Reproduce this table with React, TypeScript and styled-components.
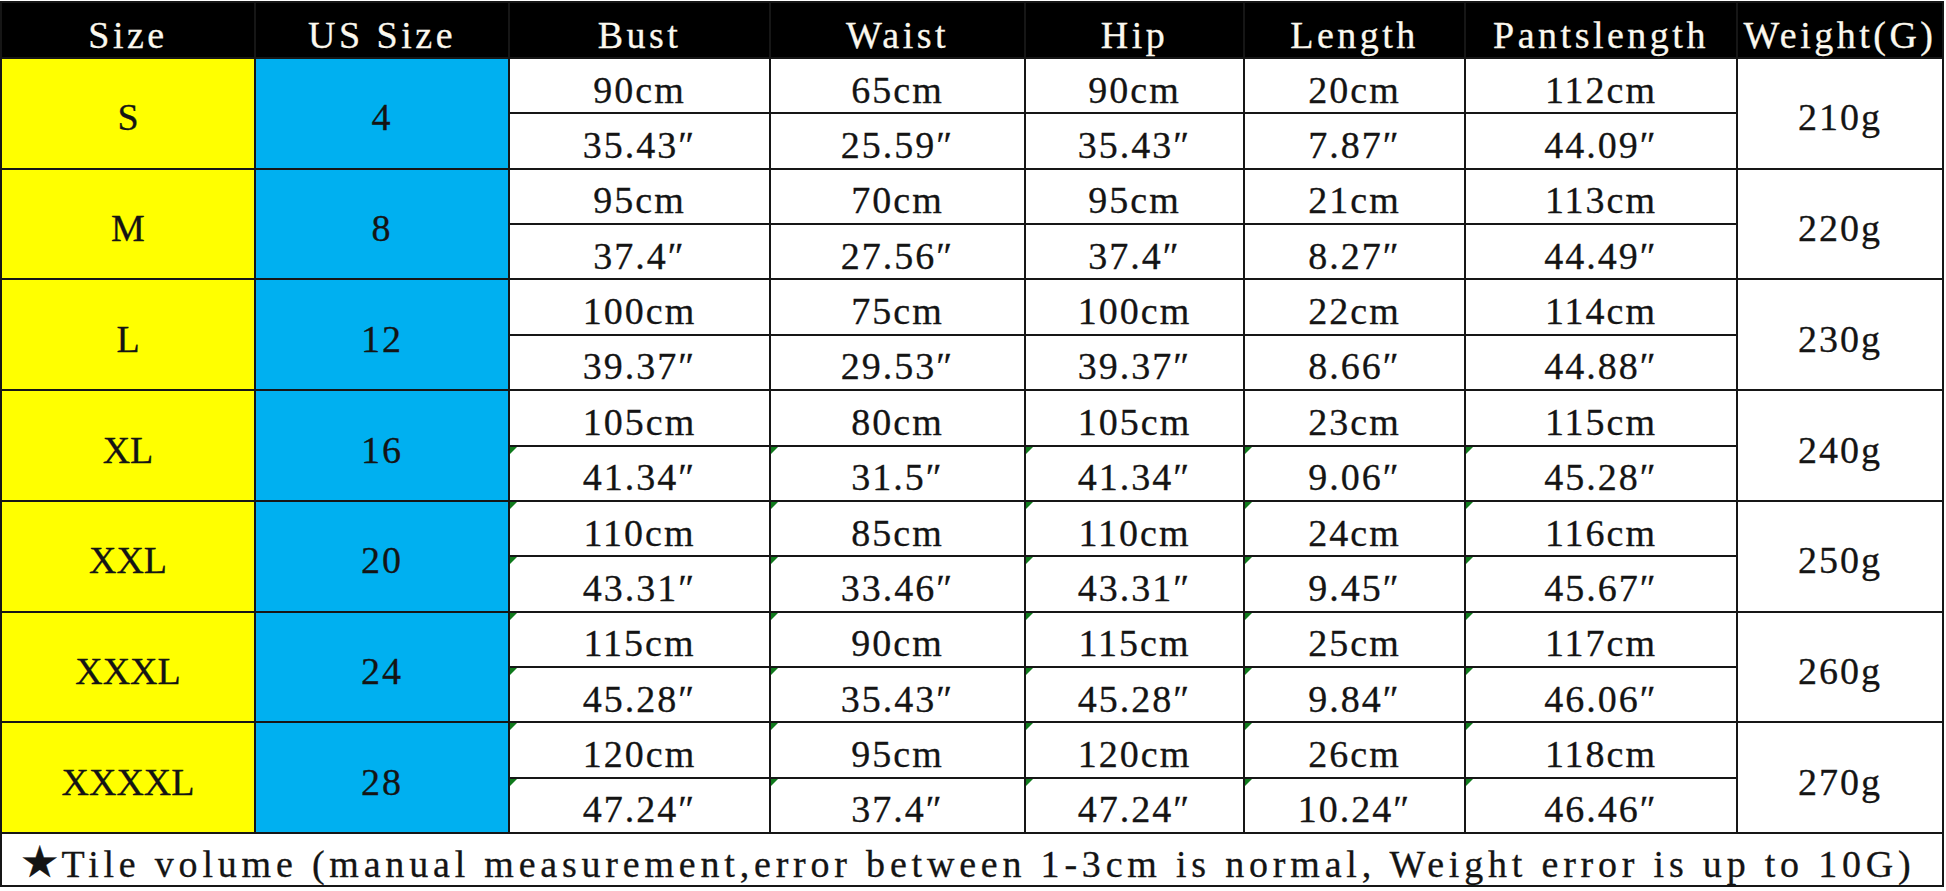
import React from "react";
import styled, { createGlobalStyle, css } from "styled-components";

const GlobalStyle = createGlobalStyle`
  html, body {
    margin: 0;
    padding: 0;
    background: #fff;
  }
  body {
    font-family: "Liberation Serif", "DejaVu Serif", serif;
  }
`;

const Chart = styled.div`
  display: grid;
  grid-template-columns: 252px 252px 259px 253px 217px 219px 270px 204px;
  grid-template-rows: 54px repeat(14, 53.36px) 51px;
  gap: 2px;
  padding: 2px;
  margin-top: 1px;
  width: fit-content;
  background: #161616;
`;

const HeadCell = styled.div`
  background: #000;
  color: #fbf8ee;
  display: flex;
  align-items: center;
  justify-content: center;
  padding-top: 9px;
`;

const Cell = styled.div<{ $bg?: string; $span?: number; $flag?: boolean }>`
  position: relative;
  grid-row: span ${(p) => p.$span ?? 1};
  background: ${(p) => p.$bg ?? "#fff"};
  color: #141414;
  display: flex;
  align-items: center;
  justify-content: center;
  padding-top: 8px;

  ${(p) =>
    p.$flag &&
    css`
      &::before {
        content: "";
        position: absolute;
        top: 0;
        left: 0;
        border-top: 7px solid #0f7a1c;
        border-right: 7px solid transparent;
      }
    `}
`;

const Label = styled.span<{ $track?: number }>`
  display: inline-block;
  font-size: 38px;
  line-height: 1;
  white-space: nowrap;
  letter-spacing: ${(p) => p.$track ?? 2}px;
  -webkit-text-stroke: 0.3px currentColor;
`;

const Note = styled.div`
  grid-column: 1 / -1;
  background: #fff;
  color: #141414;
  display: flex;
  align-items: center;
  padding: 4px 0 0 18px;
`;

const Star = styled.span`
  font-family: "DejaVu Sans", sans-serif;
  font-size: 44px;
  line-height: 1;
  letter-spacing: 0;
  margin-right: 2px;
`;

const YELLOW = "#ffff00";
const BLUE = "#00b0f0";

const headers = ["Size", "US Size", "Bust", "Waist", "Hip", "Length", "Pantslength", "Weight(G)"];

type Row = { size: string; us: string; cm: string[]; inch: string[]; weight: string };

const rows: Row[] = [
  { size: "S", us: "4", cm: ["90cm", "65cm", "90cm", "20cm", "112cm"], inch: ["35.43", "25.59", "35.43", "7.87", "44.09"], weight: "210g" },
  { size: "M", us: "8", cm: ["95cm", "70cm", "95cm", "21cm", "113cm"], inch: ["37.4", "27.56", "37.4", "8.27", "44.49"], weight: "220g" },
  { size: "L", us: "12", cm: ["100cm", "75cm", "100cm", "22cm", "114cm"], inch: ["39.37", "29.53", "39.37", "8.66", "44.88"], weight: "230g" },
  { size: "XL", us: "16", cm: ["105cm", "80cm", "105cm", "23cm", "115cm"], inch: ["41.34", "31.5", "41.34", "9.06", "45.28"], weight: "240g" },
  { size: "XXL", us: "20", cm: ["110cm", "85cm", "110cm", "24cm", "116cm"], inch: ["43.31", "33.46", "43.31", "9.45", "45.67"], weight: "250g" },
  { size: "XXXL", us: "24", cm: ["115cm", "90cm", "115cm", "25cm", "117cm"], inch: ["45.28", "35.43", "45.28", "9.84", "46.06"], weight: "260g" },
  { size: "XXXXL", us: "28", cm: ["120cm", "95cm", "120cm", "26cm", "118cm"], inch: ["47.24", "37.4", "47.24", "10.24", "46.46"], weight: "270g" },
];

export default function App() {
  return (
    <>
      <GlobalStyle />
      <Chart>
        {headers.map((h) => (
          <HeadCell key={h}>
            <Label $track={3.5}>{h}</Label>
          </HeadCell>
        ))}
        {rows.map((r, i) => (
          <React.Fragment key={r.size}>
            <Cell $bg={YELLOW} $span={2}>
              <Label $track={0}>{r.size}</Label>
            </Cell>
            <Cell $bg={BLUE} $span={2}>
              <Label>{r.us}</Label>
            </Cell>
            {r.cm.map((v, j) => (
              <Cell key={`cm_${j}`} $flag={i >= 4}>
                <Label>{v}</Label>
              </Cell>
            ))}
            <Cell $span={2}>
              <Label>{r.weight}</Label>
            </Cell>
            {r.inch.map((v, j) => (
              <Cell key={`in_${j}`} $flag={i >= 3}>
                <Label>{v}″</Label>
              </Cell>
            ))}
          </React.Fragment>
        ))}
        <Note>
          <Label $track={4.8}>
            <Star>★</Star>Tile volume (manual measurement,error between 1-3cm is normal, Weight error is up to 10G)
          </Label>
        </Note>
      </Chart>
    </>
  );
}
